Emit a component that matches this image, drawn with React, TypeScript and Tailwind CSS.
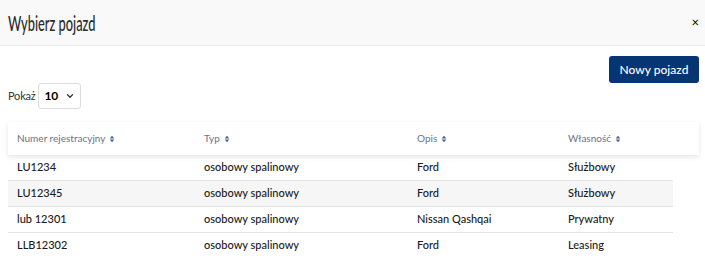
import { ChevronDown } from "lucide-react";

const rows = [
  { reg: "LU1234", type: "osobowy spalinowy", desc: "Ford", own: "Służbowy" },
  { reg: "LU12345", type: "osobowy spalinowy", desc: "Ford", own: "Służbowy" },
  { reg: "lub 12301", type: "osobowy spalinowy", desc: "Nissan Qashqai", own: "Prywatny" },
  { reg: "LLB12302", type: "osobowy spalinowy", desc: "Ford", own: "Leasing" },
];

function SortIcon() {
  return (
    <svg width="6" height="8" viewBox="0 0 6 8" className="ml-[4px] inline-block align-[-1px] text-[#46618f]">
      <path d="M3 0.8L5.3 3.4H0.7z M3 7.2L0.7 4.6H5.3z" fill="currentColor" />
    </svg>
  );
}

export default function App() {
  return (
    <div className="h-[258px] w-[705px] overflow-hidden bg-white font-['Lato',sans-serif] text-[#222]">
      {/* Header */}
      <div className="flex h-[46px] items-center justify-between border-b border-[#ececec] bg-[#f9f9f9] pl-2 pr-[6px]">
        <h1 className="origin-left scale-x-[0.61] whitespace-nowrap text-[21px] font-medium leading-none text-[#2b2b2b]">Wybierz pojazd</h1>
        <span className="text-[13px] leading-none text-black">×</span>
      </div>

      <div className="pl-2 pr-[6px]">
        <div className="flex justify-end pt-[10px]">
          <button className="h-[27px] w-[90px] rounded-[3px] bg-[#063574] text-[12px] font-medium text-white">Nowy pojazd</button>
        </div>

        <div className="flex items-center gap-[2px] text-[11px] tracking-[-0.2px] text-[#333]">
          <span>Pokaż</span>
          <div className="flex h-[26px] w-[43px] items-center justify-between rounded-[3px] border border-[#ddd] pl-[6px] pr-[5px]">
            <span className="text-[12px] font-bold text-black">10</span>
            <ChevronDown size={10} strokeWidth={3} className="text-[#333]" />
          </div>
        </div>

        {/* Table header */}
        <div className="mt-[13px] grid h-[33px] grid-cols-[187px_213px_151px_1fr] items-center bg-white pl-[9px] text-[10px] text-[#6d7384] shadow-[0_2px_5px_rgba(0,0,0,0.1)]">
          <span>Numer rejestracyjny<SortIcon /></span>
          <span>Typ<SortIcon /></span>
          <span>Opis<SortIcon /></span>
          <span>Własność<SortIcon /></span>
        </div>

        {/* Rows */}
        <div className="w-[665px]">
          {rows.map((r, i) => (
            <div
              key={i}
              className={`grid h-[26px] grid-cols-[187px_213px_151px_1fr] items-center border-b border-[#e3e3e3] pl-[9px] text-[11px] font-medium text-[#1a1a1a] ${i === 1 ? "bg-[#f6f6f6]" : ""}`}
            >
              <span>{r.reg}</span>
              <span>{r.type}</span>
              <span>{r.desc}</span>
              <span>{r.own}</span>
            </div>
          ))}
        </div>
      </div>
    </div>
  );
}
